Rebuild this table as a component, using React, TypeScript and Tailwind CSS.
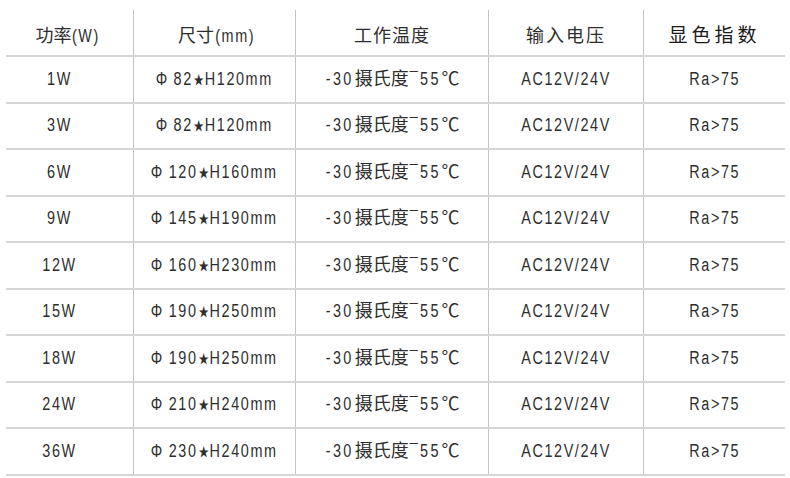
import React from 'react';

const rows: [string, string, string][] = [
  ['1W', '82', 'H120mm'],
  ['3W', '82', 'H120mm'],
  ['6W', '120', 'H160mm'],
  ['9W', '145', 'H190mm'],
  ['12W', '160', 'H230mm'],
  ['15W', '190', 'H250mm'],
  ['18W', '190', 'H250mm'],
  ['24W', '210', 'H240mm'],
  ['36W', '230', 'H240mm'],
];

const font = {
  fontFamily: '"Liberation Sans", "Noto Sans CJK SC", sans-serif',
};

const cols = 'grid grid-cols-[127px_162px_193px_155px_142px]';
const cell = 'flex items-center justify-center border-l border-[#c4c4c4]';

// the screenshot's latin font is a condensed one: squeeze the whole run
function N({ children }: { children: React.ReactNode }) {
  return <span className="inline-block scale-x-[0.8] tracking-[2px] whitespace-nowrap">{children}</span>;
}

// CJK inside a squeezed run, brought back to full width
function W({ children, m }: { children: React.ReactNode; m: string }) {
  return <span className={`inline-block scale-x-[1.25] tracking-normal ${m}`}>{children}</span>;
}

function Star() {
  return <span className="inline-block text-[13px] tracking-normal align-[1px] mx-[1px]">★</span>;
}

export default function App() {
  return (
    <div className="w-[790px] h-[478px] bg-white pt-[10px] pl-[6px] text-[#2e2e2e]" style={font}>
      <div className="w-[779px]">
        <div className={`${cols} h-[47px] border-b-2 border-[#d6d6d6] text-[18px]`}>
          <div className="flex items-center justify-center pt-[8px] pr-[4px]">
            <N>
              <W m="mx-[5px]">功率</W>(W)
            </N>
          </div>
          <div className={`${cell} pt-[8px] pl-[2px]`}>
            <N>
              <W m="mx-[6px]">尺寸</W>(mm)
            </N>
          </div>
          <div className={`${cell} pt-[8px] tracking-[1px]`}>工作温度</div>
          <div className={`${cell} pt-[8px] tracking-[2px]`}>输入电压</div>
          <div className={`${cell} pt-[8px] text-[19px] tracking-[4px] text-[#1a1a1a]`}>显色指数</div>
        </div>
        {rows.map(([power, d, h]) => (
          <div key={power} className={`${cols} h-[46.5px] border-b-2 border-[#d6d6d6] text-[18px]`}>
            <div className="flex items-center justify-center pr-[20px]">
              <N>{power}</N>
            </div>
            <div className={cell}>
              <N>
                <span className="mr-[6px]">Φ</span>
                {d}
                <Star />
                {h}
              </N>
            </div>
            <div className={cell}>
              <N>
                <span className="tracking-[3px]">-30</span>
                <W m="mx-[8px]">摄氏度</W>
                <span className="tracking-[3px]">¯55</span>
                <W m="ml-[3px] mr-[2px]">℃</W>
              </N>
            </div>
            <div className={cell}>
              <N>AC12V/24V</N>
            </div>
            <div className={cell}>
              <N>Ra&gt;75</N>
            </div>
          </div>
        ))}
      </div>
    </div>
  );
}
